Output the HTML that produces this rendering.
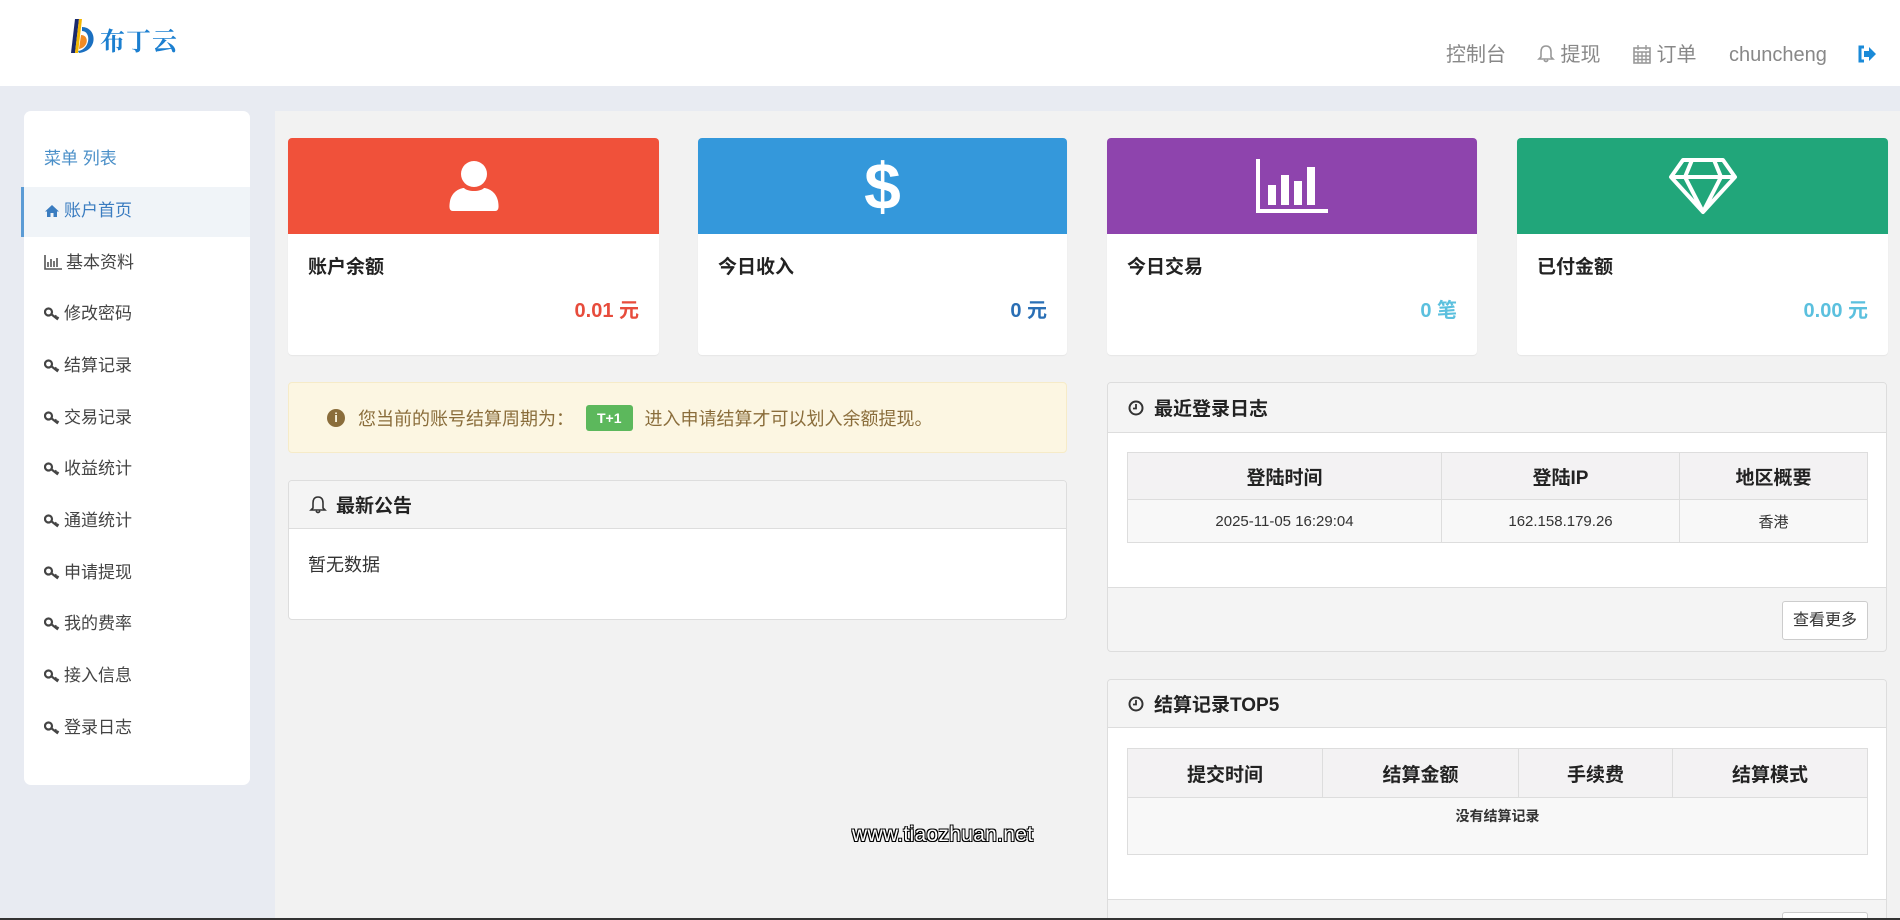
<!DOCTYPE html>
<html><head><meta charset="utf-8"><style>
*{box-sizing:border-box;margin:0;padding:0}
html{width:1900px;height:920px;overflow:hidden}
body{width:1900px;height:920px;overflow:hidden;background:#e8ebf2;font-family:"Liberation Sans","Noto Sans CJK SC",sans-serif;color:#333;position:relative}
.abs{position:absolute}
.hdr{left:0;top:0;width:1900px;height:86px;background:#fff}
.nav{top:42px;font-size:20px;color:#888;line-height:26px;white-space:nowrap}
.side{left:24px;top:111px;width:226px;height:674px;background:#fff;border-radius:7px}
.mi{position:absolute;left:0;width:226px;height:50px;line-height:48px;padding-left:20px;font-size:17px;color:#444}
.mi svg{vertical-align:-2px;margin-right:4px}
.main{left:275px;top:111px;width:1625px;height:809px;background:#f2f2f2}
.card{background:#fff;border-radius:4px;height:217px;overflow:hidden;box-shadow:0 1px 1px rgba(0,0,0,.05)}
.card .top{height:96px;display:flex;align-items:center;justify-content:center}
.card .t{position:absolute;left:20px;top:114px;font-size:19px;font-weight:bold;color:#222}
.card .v{position:absolute;right:20px;top:156px;font-size:20px;font-weight:bold}
.panel{background:#fff;border:1px solid #ddd;border-radius:4px;overflow:hidden}
.ph{background:#f4f4f4;border-bottom:1px solid #ddd;font-size:19px;font-weight:bold;color:#222;padding-left:20px;display:flex;align-items:center}
table{border-collapse:collapse;position:absolute}
td,th{border:1px solid #ddd;text-align:center}
th{background:#f3f2f3;font-size:19px;color:#222}
td{background:#f8f8f8;font-size:15px;color:#333}
</style></head><body>
<div class="abs hdr">
 <div class="abs" style="left:69px;top:17px;width:30px;height:38px">
  <svg width="30" height="38" viewBox="0 0 30 38"><path d="M6 2 L10 2 L6 36 L2 36Z" fill="#1a2a6c"/><path d="M10 2 L13 2 L9 36 L6 36Z" fill="#f2b600"/><path d="M13 10 C28 10 30 34 10 36 L9 34 C22 32 22 14 13 14Z" fill="#1a6fc0"/><path d="M12 18 C20 18 20 30 10 32Z" fill="#f08a24"/></svg>
 </div>
 <div class="abs" style="left:100px;top:22px;font-size:25px;font-weight:bold;color:#1b7fd0;font-family:'Noto Serif CJK SC',serif;letter-spacing:1px">布丁云</div>
 <div class="abs nav" style="left:1446px">控制台</div>
 <div class="abs nav" style="left:1537px"><svg width="18" height="20" viewBox="0 0 18 20" style="vertical-align:-3px"><path d="M9 2 C5 2 4 5 4 8 L4 13 L2 15 L16 15 L14 13 L14 8 C14 5 13 2 9 2Z M7 16 Q9 19 11 16" fill="none" stroke="#999" stroke-width="1.6"/></svg> 提现</div>
 <div class="abs nav" style="left:1633px"><svg width="18" height="20" viewBox="0 0 18 20" style="vertical-align:-3px"><rect x="1" y="4" width="16" height="15" fill="none" stroke="#999" stroke-width="1.6"/><path d="M1 8H17M5 1V6M13 1V6M1 12H17M1 15.5H17M5 8V19M9 8V19M13 8V19" stroke="#999" stroke-width="1.4"/></svg> 订单</div>
 <div class="abs nav" style="left:1729px">chuncheng</div>
 <div class="abs" style="left:1857px;top:45px"><svg width="20" height="18" viewBox="0 0 20 18"><path d="M7 2H3V16H7" fill="none" stroke="#1a8ad8" stroke-width="3"/><path d="M7 6H12V2L19 9L12 16V12H7Z" fill="#1a8ad8"/></svg></div>
</div>

<svg width="0" height="0" style="position:absolute"><defs><symbol id="key" viewBox="0 0 16 14"><circle cx="4.5" cy="5" r="3.5" fill="none" stroke="#444" stroke-width="2.2"/><path d="M7 7L14 12.5M11 10L12.5 8.5M13 11.5L14.5 10" stroke="#444" stroke-width="2.2" fill="none"/></symbol></defs></svg>

<div class="abs side">
 <div class="abs" style="left:20px;top:33px;font-size:17px;color:#4a8fc8">菜单 列表</div>
 <div class="mi" style="top:76px;background:#f0f4f8;border-left:3px solid #5b9bd5;left:-3px;width:229px;color:#3a7cc0"><svg width="16" height="14" viewBox="0 0 16 14"><path d="M8 1L1 7.5H3V13H6.5V9H9.5V13H13V7.5H15Z" fill="#3a7cc0"/></svg>账户首页</div>
 <div class="mi" style="top:128px"><svg width="18" height="15" viewBox="0 0 18 15"><path d="M1 0V14H18M4 12V7M7 12V4M10 12V6M13 12V3" stroke="#555" stroke-width="1.6" fill="none"/></svg>基本资料</div>
 <div class="mi" style="top:179px"><svg width="16" height="14"><use href="#key"/></svg>修改密码</div>
 <div class="mi" style="top:231px"><svg width="16" height="14"><use href="#key"/></svg>结算记录</div>
 <div class="mi" style="top:283px"><svg width="16" height="14"><use href="#key"/></svg>交易记录</div>
 <div class="mi" style="top:334px"><svg width="16" height="14"><use href="#key"/></svg>收益统计</div>
 <div class="mi" style="top:386px"><svg width="16" height="14"><use href="#key"/></svg>通道统计</div>
 <div class="mi" style="top:438px"><svg width="16" height="14"><use href="#key"/></svg>申请提现</div>
 <div class="mi" style="top:489px"><svg width="16" height="14"><use href="#key"/></svg>我的费率</div>
 <div class="mi" style="top:541px"><svg width="16" height="14"><use href="#key"/></svg>接入信息</div>
 <div class="mi" style="top:593px"><svg width="16" height="14"><use href="#key"/></svg>登录日志</div>
</div>

<div class="abs main"></div>

<div class="abs card" style="left:288px;top:138px;width:371px">
 <div class="top" style="background:#f0513a"><svg width="50" height="54" viewBox="0 0 50 54"><circle cx="25" cy="15" r="13" fill="#fff"/><path d="M4 52 C0 52 0 48 1 42 C3 32 12 29 15 29 C19 33 31 33 35 29 C38 29 47 32 49 42 C50 48 50 52 46 52Z" fill="#fff"/></svg></div>
 <div class="t">账户余额</div><div class="v" style="color:#e74c3c">0.01 元</div>
</div>
<div class="abs card" style="left:698px;top:138px;width:369px">
 <div class="top" style="background:#3498db"><div style="color:#fff;font-size:66px;font-weight:bold;line-height:66px">$</div></div>
 <div class="t">今日收入</div><div class="v" style="color:#2a6fb5">0 元</div>
</div>
<div class="abs card" style="left:1107px;top:138px;width:370px">
 <div class="top" style="background:#8e44ad"><svg width="72" height="54" viewBox="0 0 72 54"><path d="M2 0V52H72" stroke="#fff" stroke-width="4" fill="none"/><rect x="12" y="26" width="8" height="20" fill="#fff"/><rect x="25" y="16" width="8" height="30" fill="#fff"/><rect x="38" y="22" width="8" height="24" fill="#fff"/><rect x="51" y="8" width="8" height="38" fill="#fff"/></svg></div>
 <div class="t">今日交易</div><div class="v" style="color:#5bc0de">0 笔</div>
</div>
<div class="abs card" style="left:1517px;top:138px;width:371px">
 <div class="top" style="background:#21a67a"><svg width="70" height="58" viewBox="0 0 70 58"><path d="M15 3H55L67 20L35 55L3 20Z M3 20H67 M24 3L17 20L35 55L53 20L46 3" fill="none" stroke="#fff" stroke-width="4" stroke-linejoin="round"/></svg></div>
 <div class="t">已付金额</div><div class="v" style="color:#5bc0de">0.00 元</div>
</div>

<div class="abs" style="left:288px;top:382px;width:779px;height:71px;background:#fcf6e2;border:1px solid #f6ebc8;border-radius:4px;font-size:18px;color:#8a6d3b;display:flex;align-items:center;padding-left:38px">
 <span style="display:inline-block;width:18px;height:18px;border-radius:50%;background:#8a6d3b;color:#fcf6e2;font-size:13px;font-weight:bold;text-align:center;line-height:18px;margin-right:13px">i</span>您当前的账号结算周期为：<span style="display:inline-block;background:#5cb85c;color:#fff;font-size:14px;font-weight:bold;padding:0 11px;height:26px;line-height:26px;border-radius:3px;margin:0 12px 0 12px">T+1</span>进入申请结算才可以划入余额提现。
</div>

<div class="abs panel" style="left:288px;top:480px;width:779px;height:140px">
 <div class="ph" style="height:48px"><svg width="18" height="20" viewBox="0 0 18 20" style="margin-right:9px"><path d="M9 2 C5 2 4 5 4 8 L4 13 L2 15 L16 15 L14 13 L14 8 C14 5 13 2 9 2Z M7 16 Q9 19 11 16" fill="none" stroke="#333" stroke-width="1.6"/></svg>最新公告</div>
 <div style="padding:22px 0 0 19px;font-size:18px;color:#333">暂无数据</div>
</div>

<div class="abs panel" style="left:1107px;top:382px;width:780px;height:270px;background:#f4f4f4">
 <div class="ph" style="height:50px"><svg width="16" height="16" viewBox="0 0 16 16" style="margin-right:10px"><circle cx="8" cy="8" r="6.5" fill="none" stroke="#333" stroke-width="2"/><path d="M8 4V8.5H5" fill="none" stroke="#333" stroke-width="1.8"/></svg>最近登录日志</div>
 <div style="background:#fff;height:155px;border-bottom:1px solid #ddd"></div>
 <table style="left:19px;top:69px;width:741px"><tr style="height:47px"><th style="width:314px">登陆时间</th><th style="width:238px">登陆IP</th><th>地区概要</th></tr><tr style="height:43px"><td>2025-11-05 16:29:04</td><td>162.158.179.26</td><td>香港</td></tr></table>
 <div class="abs" style="left:674px;top:218px;width:86px;height:39px;background:#fff;border:1px solid #ccc;border-radius:3px;font-size:16px;text-align:center;line-height:37px;color:#333">查看更多</div>
</div>

<div class="abs panel" style="left:1107px;top:679px;width:780px;height:241px;background:#f4f4f4;border-bottom:none;border-radius:4px 4px 0 0">
 <div class="ph" style="height:48px"><svg width="16" height="16" viewBox="0 0 16 16" style="margin-right:10px"><circle cx="8" cy="8" r="6.5" fill="none" stroke="#333" stroke-width="2"/><path d="M8 4V8.5H5" fill="none" stroke="#333" stroke-width="1.8"/></svg>结算记录TOP5</div>
 <div style="background:#fff;height:172px;border-bottom:1px solid #ddd"></div>
 <table style="left:19px;top:68px;width:741px"><tr style="height:49px"><th style="width:195px">提交时间</th><th style="width:196px">结算金额</th><th style="width:154px">手续费</th><th>结算模式</th></tr><tr style="height:57px"><td colspan="4" style="vertical-align:top;padding-top:8px;font-size:14px;font-weight:bold">没有结算记录</td></tr></table>
 <div class="abs" style="left:674px;top:232px;width:86px;height:39px;background:#fff;border:1px solid #ccc;border-radius:3px"></div>
</div>

<div class="abs" style="left:852px;top:823px;font-size:21px;color:#fff;letter-spacing:0.3px;text-shadow:-1px -1px 0 #000,1px -1px 0 #000,-1px 1px 0 #000,1px 1px 0 #000">www.tiaozhuan.net</div>
<div class="abs" style="left:0;top:918px;width:1900px;height:2px;background:#333"></div>
</body></html>
